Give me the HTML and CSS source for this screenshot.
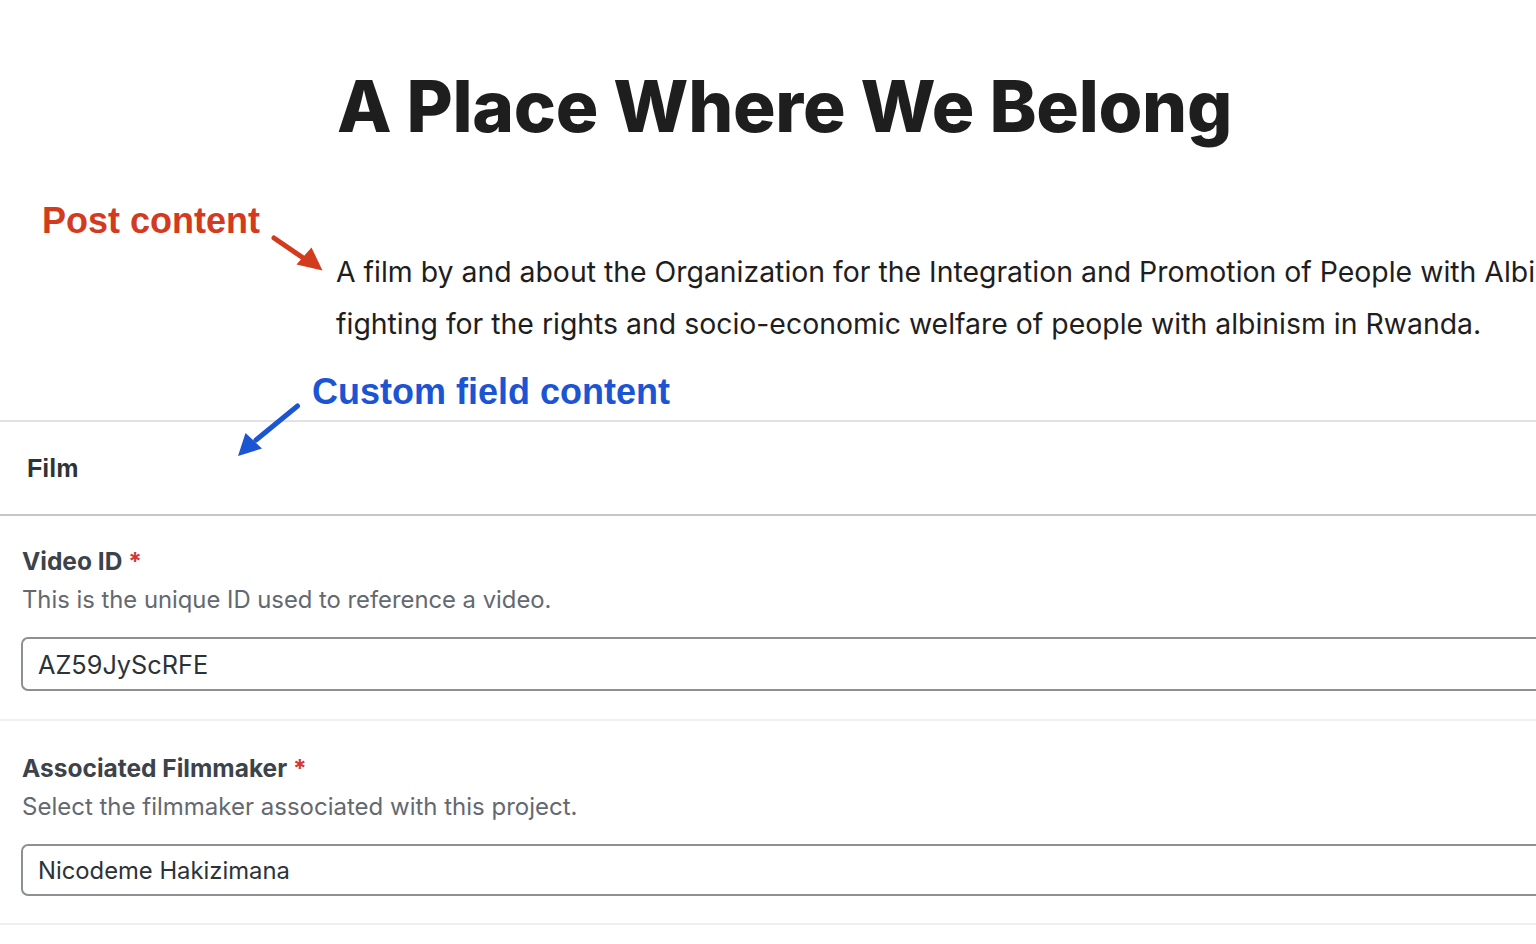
FILE: index.html
```html
<!DOCTYPE html>
<html lang="en">
<head>
<meta charset="utf-8">
<title>A Place Where We Belong</title>
<link rel="stylesheet" href="styles.css">
</head>
<body>
<div class="page">
  <h1 class="title">A Place Where We Belong</h1>
  <p class="post-content">A film by and about the Organization for the Integration and Promotion of People with Albinism (OIPPA), an organization<br>fighting for the rights and socio-economic welfare of people with albinism in Rwanda.</p>

  <section class="metabox">
    <div class="metabox-head"><span class="metabox-title">Film</span></div>
    <div class="field">
      <div class="field-label">Video ID <span class="req">*</span></div>
      <div class="field-desc">This is the unique ID used to reference a video.</div>
      <div class="field-input">AZ59JyScRFE</div>
    </div>
    <div class="field field-second">
      <div class="field-label">Associated Filmmaker <span class="req">*</span></div>
      <div class="field-desc">Select the filmmaker associated with this project.</div>
      <div class="field-input">Nicodeme Hakizimana</div>
    </div>
  </section>

  <div class="note note-post">Post content</div>
  <div class="note note-custom">Custom field content</div>
  <svg class="arrows" width="1536" height="944" viewBox="0 0 1536 944">
    <line x1="274" y1="238" x2="304" y2="258.5" stroke="#d33b1f" stroke-width="5" stroke-linecap="round"/>
    <polygon points="322.5,270.5 296.5,264.5 311.5,247.5" fill="#d33b1f"/>
    <line x1="297.5" y1="406" x2="256" y2="440" stroke="#1b55d3" stroke-width="5" stroke-linecap="round"/>
    <polygon points="238,456 245.5,433 262,448.5" fill="#1b55d3"/>
  </svg>
</div>
</body>
</html>
```

FILE: styles.css
```css
html, body {
  margin: 0;
  padding: 0;
  background: #ffffff;
}

body {
  width: 1536px;
  height: 944px;
  overflow: hidden;
}

.page {
  position: relative;
  width: 1536px;
  height: 944px;
  overflow: hidden;
  font-family: Inter, "Noto Sans", sans-serif;
}

.title {
  margin: 71px 0 0 0;
  padding-left: 337px;
  font-family: Inter, sans-serif;
  font-weight: 800;
  font-size: 71px;
  line-height: 71px;
  letter-spacing: -0.3px;
  color: #1e1e1e;
  white-space: nowrap;
}

.post-content {
  margin: 104px 0 0 0;
  padding-left: 336px;
  font-size: 28.4px;
  line-height: 52px;
  color: #1e1e1e;
  white-space: nowrap;
}

.metabox {
  margin-top: 70px;
  border-top: 2px solid #e2e2e4;
}

.metabox-head {
  height: 92px;
  display: flex;
  align-items: center;
  padding-left: 27px;
  border-bottom: 2px solid #c5c6ca;
}

.metabox-title {
  font-family: "Liberation Sans", Arial, sans-serif;
  font-weight: 700;
  font-size: 25px;
  color: #2f3337;
}

.field {
  padding: 29px 0 28px 21px;
  border-bottom: 2px solid #efeff0;
}

.field-second {
  padding-top: 31px;
  padding-bottom: 27px;
}

.field-label {
  font-weight: 700;
  font-size: 24.5px;
  line-height: 32px;
  color: #3c434a;
  padding-left: 1px;
}

.req {
  color: #d63638;
}

.field-desc {
  margin-top: 7px;
  font-size: 23.8px;
  line-height: 32px;
  color: #646970;
  padding-left: 1px;
}

.field-second .field-desc {
  font-size: 24px;
  margin-top: 7px;
}

.field-input {
  margin-top: 21px;
  height: 50px;
  display: flex;
  align-items: center;
  padding-left: 15px;
  border: 2px solid #8c8f94;
  border-right: none;
  border-radius: 7px 0 0 7px;
  font-size: 25.3px;
  color: #2c3338;
}

.field-second .field-input {
  height: 48px;
  font-size: 23.8px;
}

.note {
  position: absolute;
  font-family: "Liberation Sans", Arial, sans-serif;
  font-weight: 700;
  font-size: 36px;
  line-height: 36px;
  white-space: nowrap;
}

.note-post {
  left: 42px;
  top: 203px;
  color: #d33b1f;
}

.note-custom {
  left: 312px;
  top: 374px;
  color: #1b55d3;
}

.arrows {
  position: absolute;
  left: 0;
  top: 0;
  pointer-events: none;
}
```
